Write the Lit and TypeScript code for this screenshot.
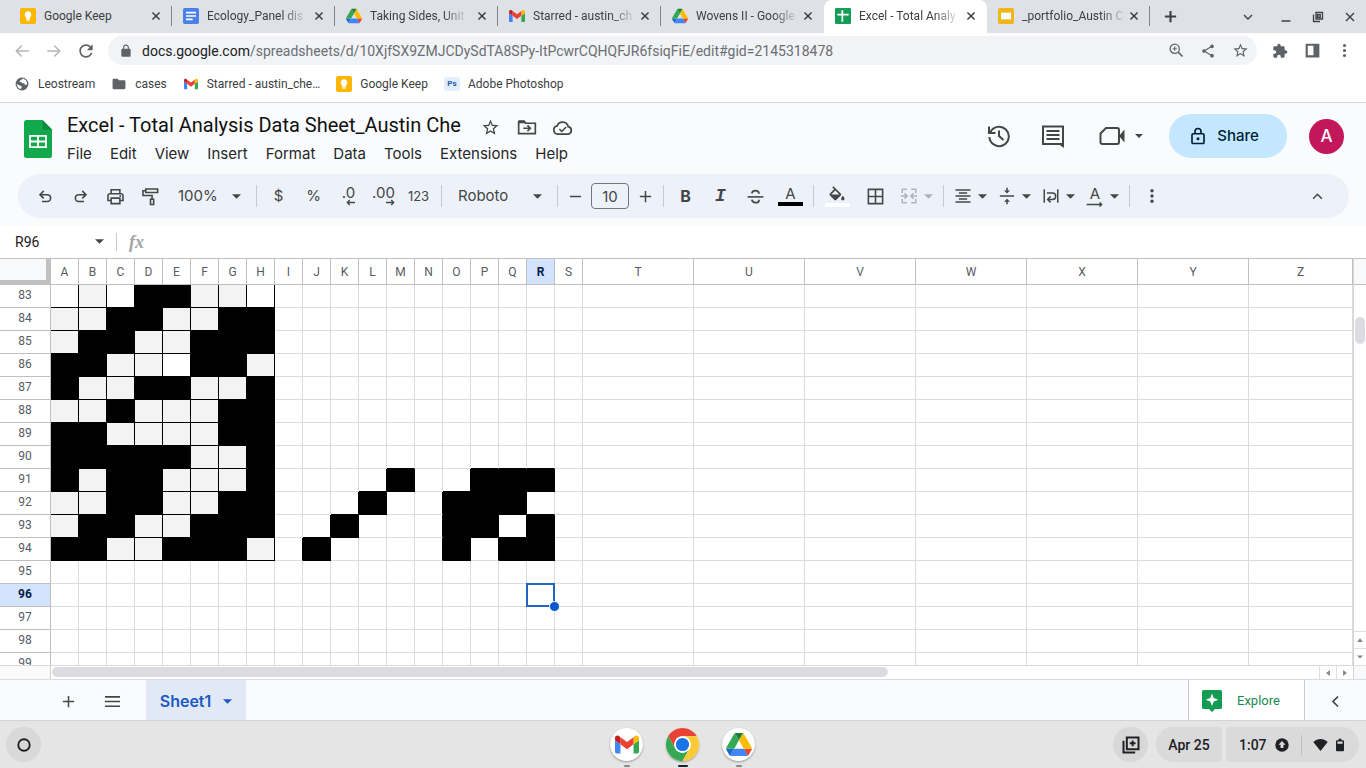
import { LitElement, html, svg, css, nothing } from "lit";
import { customElement, property } from "lit/decorators.js";
import { classMap } from "lit/directives/class-map.js";

const line = (d: string, w = 2) =>
  svg`<path d=${d} fill="none" stroke="currentColor" stroke-width=${w} />`;
const fill = (d: string, color = "currentColor") => svg`<path d=${d} fill=${color} />`;

const driveMark = svg`
  <path fill="#1967d2" d="m6.6 66.85 3.85 6.65c.8 1.4 1.95 2.5 3.3 3.3l13.75-23.8h-27.5c0 1.55.4 3.1 1.2 4.5z"/>
  <path fill="#34a853" d="m43.65 25-13.75-23.8c-1.35.8-2.5 1.9-3.3 3.3l-25.4 44a9.06 9.06 0 0 0 -1.2 4.5h27.5z"/>
  <path fill="#ea4335" d="m73.55 76.8c1.35-.8 2.5-1.9 3.3-3.3l1.6-2.75 7.65-13.25c.8-1.4 1.2-2.95 1.2-4.5h-27.502l5.852 11.5z"/>
  <path fill="#188038" d="m43.65 25 13.75-23.8c-1.35-.8-2.9-1.2-4.5-1.2h-18.5c-1.6 0-3.15.45-4.5 1.2z"/>
  <path fill="#4285f4" d="m59.8 53h-32.3l-13.75 23.8c1.35.8 2.9 1.2 4.5 1.2h50.8c1.6 0 3.15-.45 4.5-1.2z"/>
  <path fill="#fbbc04" d="m73.4 26.5-12.7-22c-.8-1.4-1.95-2.5-3.3-3.3l-13.75 23.8 16.15 28h27.45c0-1.55-.4-3.1-1.2-4.5z"/>`;

const gmailMark = svg`
  <path fill="#4285f4" d="M58 108h14V74L52 59v43c0 3.32 2.69 6 6 6"/>
  <path fill="#34a853" d="M120 108h14c3.32 0 6-2.69 6-6V59l-20 15"/>
  <path fill="#fbbc04" d="M120 48v26l20-15v-8c0-7.42-8.47-11.65-14.4-7.2"/>
  <path fill="#ea4335" d="M72 74V48l24 18 24-18v26L96 92"/>
  <path fill="#c5221f" d="M52 51v8l20 15V48l-5.6-4.2c-5.94-4.45-14.4-.22-14.4 7.2"/>`;

const ICONS: Record<string, { box?: string; art: unknown }> = {
  close: { art: line("M3.500 3.500l17 17M20.500 3.500l-17 17", 3.6) },
  closeThin: { art: line("M4 4l16 16M20 4L4 20", 2.8) },
  add: { art: line("M12 3v18M3 12h18", 2.4) },
  addBold: { art: line("M12 3v18M3 12h18", 3.4) },
  minus: { art: line("M3 12h18", 2.4) },
  chevronDown: { art: line("M4 8l8 8 8-8", 2.8) },
  chevronUp: { art: line("M4 16l8-8 8 8", 2.8) },
  chevronLeft: { art: line("M16 4l-8 8 8 8", 2.8) },
  minimize: { art: line("M3 20h18", 3) },
  restore: { art: line("M8 3h13v13H8zM11 7.500h5.500v5h-5.500zM3 7v14h13", 2.6) },
  back: { art: fill("M21 11H6.830l5.590-5.590L11 4l-8 8 8 8 1.410-1.410L6.830 13H21v-2z") },
  forward: { art: fill("M13 4l-1.410 1.410L17.170 11H3v2h14.170l-5.580 5.590L13 20l8-8z") },
  reload: { art: fill("M17.650 6.350C16.200 4.900 14.210 4 12 4c-4.420 0-7.990 3.580-7.990 8s3.570 8 7.990 8c3.730 0 6.840-2.550 7.730-6h-2.080c-.82 2.330-3.040 4-5.650 4-3.310 0-6-2.690-6-6s2.690-6 6-6c1.660 0 3.140.69 4.220 1.780L13 11h7V4l-2.350 2.350z") },
  lock: { art: fill("M18 8h-1V6c0-2.760-2.240-5-5-5S7 3.240 7 6v2H6c-1.100 0-2 .9-2 2v10c0 1.100.9 2 2 2h12c1.100 0 2-.9 2-2V10c0-1.100-.9-2-2-2zM9 6c0-1.660 1.340-3 3-3s3 1.340 3 3v2H9V6z") },
  zoom: { art: svg`<circle cx="9.500" cy="9.500" r="6.500" fill="none" stroke="currentColor" stroke-width="1.800"/>${line("M14.500 14.500l6 6", 2.4)}${line("M9.500 6.500v6M6.500 9.500h6", 1.6)}` },
  share: { art: svg`<g fill="currentColor"><circle cx="6" cy="12" r="2.800"/><circle cx="18" cy="5" r="2.800"/><circle cx="18" cy="19" r="2.800"/></g>${line("M18 5L6 12l12 7", 1.8)}` },
  star: { art: fill("M22 9.240l-7.190-.62L12 2 9.190 8.630 2 9.240l5.460 4.730L5.820 21 12 17.270 18.180 21l-1.630-7.030L22 9.240zM12 15.400l-3.760 2.270 1-4.280-3.320-2.880 4.380-.38L12 6.100l1.710 4.040 4.380.38-3.320 2.880 1 4.280L12 15.400z") },
  puzzle: { art: fill("M20.500 11H19V7c0-1.100-.9-2-2-2h-4V3.500C13 2.120 11.880 1 10.500 1S8 2.120 8 3.500V5H4c-1.100 0-1.990.9-1.990 2v3.800H3.500c1.490 0 2.700 1.210 2.700 2.700s-1.210 2.700-2.700 2.700H2V20c0 1.100.9 2 2 2h3.800v-1.500c0-1.490 1.210-2.700 2.700-2.700 1.490 0 2.700 1.210 2.700 2.700V22H17c1.100 0 2-.9 2-2v-4h1.500c1.380 0 2.500-1.120 2.500-2.500S21.880 11 20.500 11z") },
  panel: { art: svg`<path fill="currentColor" fill-rule="evenodd" d="M1 1h22v22H1zM4.500 4.500v15h9v-15z"/>` },
  dots: { art: svg`<g fill="currentColor"><circle cx="12" cy="5" r="2.200"/><circle cx="12" cy="12" r="2.200"/><circle cx="12" cy="19" r="2.200"/></g>` },
  globe: { art: svg`<circle cx="12" cy="12" r="11" fill="currentColor"/><path fill="#fff" d="M10 20.600C5.800 19.800 3 16.300 3 12l5 2.500c2 .5 4 1 3.500 3zM13 2.700l-2.500 3c-2 0-2.500 1-2.500 2.800h3l1 2h4l1 3 3.500-.5c1-4-1.500-9-7.500-10.300z"/>` },
  folder: { art: fill("M9.500 3H3C1.800 3 1 3.900 1 5v14c0 1.100.9 2 2 2h18c1.100 0 2-.9 2-2V7.500c0-1.100-.9-2-2-2h-9z") },
  keep: { art: svg`<rect width="24" height="24" rx="3" fill="#fbb704"/><path fill="#fff" d="M12 5a5 5 0 0 0-3 9v2h6v-2a5 5 0 0 0-3-9zM9.500 17h5v2h-5z"/>` },
  docs: { art: svg`<rect width="24" height="24" rx="2.500" fill="#4a80e8"/><path stroke="#fff" stroke-width="2.400" d="M4.500 7h15M4.500 12h15M4.500 17h10"/>` },
  sheets: { art: svg`<rect width="24" height="24" rx="2" fill="#149d58"/><path stroke="#fff" stroke-width="2.600" d="M3.500 10h17M11 3.500v17"/>` },
  slides: { art: svg`<rect width="24" height="24" rx="2.500" fill="#f0b41c"/><rect x="4.500" y="7" width="15" height="10" fill="#fff"/>` },
  drive: { box: "0 0 87.300 78", art: driveMark },
  gmail: { box: "52 34 88 82", art: gmailMark },
  gmailWide: { box: "52 42 88 66", art: gmailMark },
  chrome: { box: "0 0 48 48", art: svg`
    <path fill="#ea4335" d="M24 12H44.780A24 24 0 0 0 3.216 12L13.610 30A12 12 0 0 1 24 12"/>
    <path fill="#34a853" d="M13.610 30L3.216 12A24 24 0 0 0 24 48L34.390 30A12 12 0 0 1 13.610 30"/>
    <path fill="#fbc934" d="M34.390 30L24 48A24 24 0 0 0 44.780 12H24A12 12 0 0 1 34.390 30"/>
    <circle cx="24" cy="24" r="12" fill="#fff"/><circle cx="24" cy="24" r="9.600" fill="#1a73e8"/>` },
  sheetsDoc: { box: "0 0 28 38", art: svg`
    <path fill="#12a84c" d="M2.500 0H18.500L28 9.500V35.500A2.500 2.500 0 0 1 25.500 38H2.500A2.500 2.500 0 0 1 0 35.500V2.500A2.500 2.500 0 0 1 2.500 0z"/>
    <path fill="#0c8a3c" d="M18.500 0L28 9.500H18.500z"/>
    <path fill="none" stroke="#fff" stroke-width="1.800" d="M6 15.900h16v11.200H6zM14 15.900v11.200M6 21.500h16"/>` },
  moveTo: { art: svg`${line("M2 5.500h6.500l2 2H22V20H2z", 2)}${line("M7.500 13.500h8M12.500 10l3.500 3.500-3.500 3.500", 2)}${fill("M2 4h7l2.500 3.500H2z")}` },
  cloud: { art: svg`${line("M6.500 19.500a4.700 4.700 0 0 1-.6-9.300A6.600 6.600 0 0 1 18.500 11a4.300 4.300 0 0 1-.2 8.500z", 2)}${line("M8.500 13.800l2.700 2.700 5-5", 1.8)}` },
  history: { art: svg`${line("M3.200 8.500A9.700 9.700 0 1 1 2.400 13", 2)}${line("M2 2.500v6.500h6.500M12 6.500V12l4.500 4", 2)}` },
  comment: { art: svg`${line("M2 2.500h20V20H2z", 2)}${fill("M16.500 19.500H23V24z")}${line("M5.500 7h13M5.500 11h13M5.500 15h13", 2)}` },
  video: { box: "0 0 26 24", art: svg`${line("M7 4h11a2 2 0 0 1 2 2v12a2 2 0 0 1-2 2H3.500a2 2 0 0 1-2-2V9.500z", 2)}${fill("M20 12l5.500-6.500v13z")}` },
  lockOutline: { art: svg`<rect x="4" y="9" width="16" height="13" rx="1.500" fill="none" stroke="currentColor" stroke-width="2.200"/>${line("M8 9V6a4 4 0 0 1 8 0v3", 2.2)}<circle cx="12" cy="15.500" r="2" fill="currentColor"/>` },
  undo: { art: line("M7 19h7.500a4.800 4.800 0 0 0 0-9.600H4.500M9.500 4L4.200 9.400l5.300 5.300", 2.2) },
  redo: { art: line("M17 19H9.500a4.800 4.800 0 0 1 0-9.600h10M14.500 4l5.300 5.400-5.300 5.300", 2.2) },
  print: { art: line("M6.500 8V3.500h11V8M6.500 17H2.500v-6A2.500 2.500 0 0 1 5 8.500h14a2.500 2.500 0 0 1 2.500 2.500v6h-4M6.500 14h11v7h-11zM17 11.500h2", 2) },
  paint: { art: line("M6 2.500h15v4.500H6zM6 4.700H2.500v6H14v4.300M12 15.500h4v6.500h-4z", 2) },
  decLess: { box: "0 0 12 8", art: line("M12 4H2M5 .800L1.800 4 5 7.200", 1.8) },
  decMore: { box: "0 0 12 8", art: line("M0 4h10M7 .800L10.200 4 7 7.200", 1.8) },
  strike: { art: svg`${line("M2 12.500h20", 2)}${line("M16.500 8.500c-.3-2.500-2.200-3.800-4.600-3.800-2.300 0-4.300 1.100-4.400 3.400M7.500 16c.3 2.500 2 3.800 4.500 3.800 2.600 0 4.500-1.300 4.500-3.800", 2.2)}` },
  bucket: { box: "0 0 24 20", art: fill("M16.560 8.940L7.620 0 6.210 1.410l2.380 2.380-5.150 5.150c-.59.59-.59 1.540 0 2.120l5.500 5.500c.29.290.68.440 1.060.440s.77-.15 1.060-.44l5.500-5.500c.59-.58.59-1.530 0-2.120zM5.210 10L10 5.210 14.790 10H5.210zM19 11.500s-2 2.170-2 3.500c0 1.100.9 2 2 2s2-.9 2-2c0-1.330-2-3.500-2-3.500z") },
  borders: { art: fill("M2 2v20h20V2H2zm9 18H4v-7h7v7zm0-9H4V4h7v7zm9 9h-7v-7h7v7zm0-9h-7V4h7v7z") },
  merge: { art: svg`${line("M9 3H3v5M3 16v5h6M15 3h6v5M21 16v5h-6", 2)}${line("M1 12h8M6 8.500L9.500 12 6 15.500M23 12h-8M18 8.500L14.500 12l3.500 3.500", 2)}` },
  align: { art: fill("M6.500 15v2h11v-2zM2 21h20v-2H2zM2 13h20v-2H2zM6.500 7v2h11V7zM2 3v2h20V3z") },
  valign: { art: fill("M8 19.500h3V23h2v-3.500h3l-4-4zM16 4.500h-3V1h-2v3.500H8l4 4zM2.500 11v2h19v-2z") },
  wrap: { art: line("M3 3v18M21 3v18M6.500 8H14a3.500 3.500 0 0 1 0 8.500H8M11.500 12.500l-4 4 4 4", 2) },
  rotate: { box: "0 0 20 6", art: line("M0 3h18M15.500 .500L18 3l-2.500 2.500", 1.6) },
  caret: { box: "0 0 10 5", art: fill("M0 0h10L5 5z") },
  caretUp: { box: "0 0 8 5", art: fill("M0 5h8L4 0z") },
  caretLeft: { box: "0 0 5 8", art: fill("M5 0v8L0 4z") },
  caretRight: { box: "0 0 5 8", art: fill("M0 0v8l5-4z") },
  menu: { art: line("M0 4.500h24M0 12h24M0 19.500h24", 2.6) },
  explore: { box: "0 0 20 22", art: svg`<path fill="#149d52" d="M1.500 0h17A1.500 1.500 0 0 1 20 1.500v16a1.500 1.500 0 0 1-1.500 1.500H13l-3 3-3-3H1.500A1.500 1.500 0 0 1 0 17.500v-16A1.500 1.500 0 0 1 1.500 0z"/><path fill="#fff" d="M10 3.500l1.700 4.600 4.600 1.700-4.600 1.700L10 16.100l-1.700-4.600-4.600-1.700 4.600-1.700z"/>` },
  ring: { art: svg`<circle cx="12" cy="12" r="9.800" fill="none" stroke="currentColor" stroke-width="3.200"/>` },
  captures: { art: svg`${line("M7 3h14v14H7zM3 7v14h14", 2.4)}${line("M14 6.500v7M10.500 10h7", 2.4)}` },
  update: { art: svg`<circle cx="12" cy="12" r="11.500" fill="currentColor"/><path fill="#dbdbdb" d="M12 5l6 6.500h-3.500V17h-5v-5.500H6z"/>` },
  wifi: { box: "0 0 24 20", art: fill("M12 20L0 5C7-1.500 17-1.500 24 5z") },
  battery: { box: "0 0 14 22", art: svg`<path fill="currentColor" fill-rule="evenodd" d="M4.500 0h5v2.500H12A2 2 0 0 1 14 4.500v15.500a2 2 0 0 1-2 2H2a2 2 0 0 1-2-2V4.500A2 2 0 0 1 2 2.500h2.500zM2.500 5v4h9V5z"/>` },
};

@customElement("ui-icon")
class UiIcon extends LitElement {
  @property() name = "";
  @property({ type: Number }) w = 16;
  @property({ type: Number }) h = 0;
  static styles = css`
    :host { display: inline-flex; flex: none; }
    svg { display: block; }
  `;
  render() {
    const icon = ICONS[this.name];
    return html`<svg width=${this.w} height=${this.h || this.w} viewBox=${icon.box ?? "0 0 24 24"} aria-hidden="true">${icon.art}</svg>`;
  }
}

const reset = css`
  * { box-sizing: border-box; }
  button, input, select {
    font: inherit; color: inherit; background: none; border: 0; margin: 0; padding: 0;
    border-radius: 0; outline: 0;
  }
  button { display: inline-flex; align-items: center; justify-content: center; flex: none; white-space: nowrap; }
  a { color: inherit; text-decoration: none; }
`;

const TABS = [
  { icon: "keep", title: "Google Keep" },
  { icon: "docs", title: "Ecology_Panel dis", fade: true },
  { icon: "drive", title: "Taking Sides, Unit", fade: true },
  { icon: "gmail", title: "Starred - austin_ch", fade: true },
  { icon: "drive", title: "Wovens II - Google", fade: true },
  { icon: "sheets", title: "Excel - Total Analy", fade: true, active: true },
  { icon: "slides", title: "_portfolio_Austin C", fade: true },
];

const BOOKMARKS = [
  { icon: "globe", title: "Leostream" },
  { icon: "folder", title: "cases" },
  { icon: "gmail", title: "Starred - austin_che…" },
  { icon: "keep", title: "Google Keep" },
  { icon: "", title: "Adobe Photoshop" },
];

@customElement("browser-chrome")
class BrowserChrome extends LitElement {
  static styles = [reset, css`
    :host { display: block; background: #fff; color: #3c4043; font: 12px/16px Roboto, sans-serif; border-bottom: 1px solid #d5d9df; }
    .strip { display: flex; align-items: stretch; height: 33px; background: #dee1e6; padding-left: 9px; }
    .tab { display: flex; align-items: center; gap: 8px; flex: 0 1 163px; min-width: 0; padding: 0 11px 2px 11px; position: relative; }
    .tab::after { content: ""; position: absolute; right: 0; top: 6px; height: 20px; width: 1px; background: #80868b; }
    .tab.active { background: #fff; border-radius: 8px 8px 0 0; }
    .tab.active::after, .tab.before::after { display: none; }
    .tab .label { flex: 1; justify-content: flex-start; white-space: nowrap; min-width: 0; }
    .fade span { -webkit-mask-image: linear-gradient(90deg, #000 78%, rgba(0, 0, 0, 0.15)); mask-image: linear-gradient(90deg, #000 78%, rgba(0, 0, 0, 0.15)); }
    .btn { width: 32px; color: #5f6368; }
    .strip .btn { color: #3c4043; }
    .newtab { margin-left: 4px; }
    .window { margin-left: auto; display: flex; }
    .window .list { margin-right: 6px; }
    .bar { display: flex; align-items: center; height: 35px; padding: 0 6px; }
    .omnibox { flex: 1; display: flex; align-items: center; height: 29px; margin: 0 7px 0 6px; padding: 0 1px 0 10px; border-radius: 15px; background: #f1f3f4; color: #5f6368; gap: 8px; min-width: 0; }
    .url { flex: 1; font-size: 14px; white-space: nowrap; overflow: hidden; color: #6b6f74; }
    .url b { font-weight: 400; color: #202124; }
    .actions { display: flex; }
    .off { color: #b4b6b9; }
    .bookmarks { display: flex; align-items: center; gap: 16px; height: 34px; padding: 0 14px 2px; }
    .bookmarks a { display: flex; align-items: center; gap: 8px; color: #3c4043; }
    .mark { display: flex; width: 16px; justify-content: center; color: #5f6368; }
    .ps { font: 700 8px/14px Roboto, sans-serif; width: 16px; text-align: center; background: #e3edfa; color: #1b5fae; border-radius: 3px; }
  `];
  render() {
    return html`
      <div class="strip">
        ${TABS.map((t, i) => html`
          <div class=${classMap({ tab: true, active: !!t.active, before: !!TABS[i + 1]?.active })}>
            <ui-icon name=${t.icon} w="16"></ui-icon>
            <button class=${classMap({ label: true, fade: !!t.fade })}><span>${t.title}</span></button>
            <button aria-label="Close tab"><ui-icon name="close" w="10"></ui-icon></button>
          </div>`)}
        <button class="btn newtab" aria-label="New tab"><ui-icon name="addBold" w="15"></ui-icon></button>
        <div class="window">
          <button class="btn list" aria-label="Search tabs"><ui-icon name="chevronDown" w="12"></ui-icon></button>
          <button class="btn" aria-label="Minimize"><ui-icon name="minimize" w="12"></ui-icon></button>
          <button class="btn" aria-label="Restore"><ui-icon name="restore" w="12"></ui-icon></button>
          <button class="btn" aria-label="Close"><ui-icon name="closeThin" w="12"></ui-icon></button>
        </div>
      </div>
      <div class="bar">
        <button class="btn off" aria-label="Back"><ui-icon name="back" w="18"></ui-icon></button>
        <button class="btn off" aria-label="Forward"><ui-icon name="forward" w="18"></ui-icon></button>
        <button class="btn" aria-label="Reload"><ui-icon name="reload" w="20"></ui-icon></button>
        <div class="omnibox">
          <ui-icon name="lock" w="16" h="14"></ui-icon>
          <div class="url" role="textbox" tabindex="0" contenteditable="true" spellcheck="false" aria-label="Address"><b>docs.google.com</b>/spreadsheets/d/10XjfSX9ZMJCDySdTA8SPy-ItPcwrCQHQFJR6fsiqFiE/edit#gid=2145318478</div>
          <div class="actions">
            <button class="btn" aria-label="Zoom"><ui-icon name="zoom" w="17"></ui-icon></button>
            <button class="btn" aria-label="Share page"><ui-icon name="share" w="16"></ui-icon></button>
            <button class="btn" aria-label="Bookmark"><ui-icon name="star" w="17"></ui-icon></button>
          </div>
        </div>
        <button class="btn" aria-label="Extensions"><ui-icon name="puzzle" w="16"></ui-icon></button>
        <button class="btn" aria-label="Side panel"><ui-icon name="panel" w="15"></ui-icon></button>
        <button class="btn" aria-label="Menu"><ui-icon name="dots" w="17"></ui-icon></button>
      </div>
      <nav class="bookmarks">
        ${BOOKMARKS.map((b) => html`<a href="#">${b.icon
          ? html`<span class="mark"><ui-icon name=${b.icon} w=${b.icon === "keep" ? 16 : 14}></ui-icon></span>`
          : html`<span class="ps" aria-hidden="true">Ps</span>`}<span>${b.title}</span></a>`)}
      </nav>`;
  }
}

const MENUS = ["File", "Edit", "View", "Insert", "Format", "Data", "Tools", "Extensions", "Help"];

@customElement("sheets-header")
class SheetsHeader extends LitElement {
  static styles = [reset, css`
    :host { display: block; background: #f9fbfd; color: #444746; font: 15px/20px Inter, sans-serif; padding-bottom: 9px; }
    .top { display: flex; height: 71px; padding: 0 22px 0 24px; }
    .logo { padding-top: 17px; margin-right: 15px; }
    .name { display: flex; align-items: center; height: 26px; margin: 9px 0 2px; }
    h1 { margin: 0 20px 0 0; font: 400 20px/26px Roboto, sans-serif; color: #111; white-space: nowrap; }
    .name button { width: 20px; margin-right: 16px; margin-top: 4px; }
    .menus { display: flex; gap: 18px; height: 28px; align-items: center; }
    .menus button { color: #252728; }
    .right { display: flex; align-items: center; margin: 0 0 5px auto; }
    .right .tool { width: 54px; }
    .right .meet { width: 63px; gap: 10px; justify-content: flex-end; }
    .share { height: 44px; width: 118px; margin: 0 22px 0 26px; border-radius: 22px; background: #c2e7ff; color: #001d35; font-weight: 500; gap: 10px; padding-right: 8px; }
    .avatar { width: 35px; height: 35px; border-radius: 50%; background: #c2185b; color: #fff; font-size: 17px; font-weight: 500; }
    .tools { display: flex; align-items: center; height: 44px; margin: 0 17px 0 18px; padding: 0 14px 0 10px; border-radius: 22px; background: #edf2fa; }
    .tools .t { width: 35px; height: 30px; }
    .tools .wide { width: 38px; }
    .tools .split { width: 44px; height: 30px; justify-content: flex-start; gap: 5px; padding-left: 5px; }
    .tools .step { width: 26px; height: 30px; }
    .sep { flex: none; width: 1px; height: 22px; margin: 0 4px 0 5px; background: #c7cbd1; }
    .drop { display: grid; align-items: center; flex: none; }
    .drop > * { grid-area: 1 / 1; }
    .drop ui-icon { justify-self: end; margin-right: 10px; pointer-events: none; }
    .drop select { appearance: none; width: 100%; height: 30px; padding-left: 10px; }
    .zoom { width: 83px; }
    .font { width: 106px; }
    .font select { padding-left: 12px; }
    .size { width: 38px; height: 26px; margin: 0 3px; border: 1px solid #747775; border-radius: 4px; text-align: center; font-size: 15px; }
    .small { font-size: 13px; }
    .bold { font-weight: 700; font-size: 16px; }
    .ital { font: italic 700 18px/20px "Liberation Mono", monospace; }
    .stack { display: grid; justify-items: center; }
    .stack i { width: 25px; height: 4px; background: #000; }
    .stack i.white { background: #fff; }
    .stack span { font-size: 15px; line-height: 16px; }
    .dec { display: grid; }
    .dec span { font-size: 15px; line-height: 13px; }
    .dec ui-icon { justify-self: end; }
    .dim { color: #aeb3ba; }
    .end { margin-left: auto; }
  `];
  tool(name: string, label: string, w = 18) {
    return html`<button class="t" aria-label=${label}><ui-icon name=${name} w=${w}></ui-icon></button>`;
  }
  split(name: string, label: string, dim = false) {
    return html`<button class=${classMap({ split: true, dim })} aria-label=${label}><ui-icon name=${name} w="20" h="18"></ui-icon><ui-icon name="caret" w="9" h="5"></ui-icon></button>`;
  }
  render() {
    const sep = html`<span class="sep"></span>`;
    return html`
      <div class="top">
        <div class="logo"><ui-icon name="sheetsDoc" w="28" h="38"></ui-icon></div>
        <div>
          <div class="name">
            <h1>Excel - Total Analysis Data Sheet_Austin Che</h1>
            <button aria-label="Star"><ui-icon name="star" w="19"></ui-icon></button>
            <button aria-label="Move"><ui-icon name="moveTo" w="20"></ui-icon></button>
            <button aria-label="Document status"><ui-icon name="cloud" w="21"></ui-icon></button>
          </div>
          <div class="menus">${MENUS.map((m) => html`<button>${m}</button>`)}</div>
        </div>
        <div class="right">
          <button class="tool" aria-label="Version history"><ui-icon name="history" w="24"></ui-icon></button>
          <button class="tool" aria-label="Comments"><ui-icon name="comment" w="24"></ui-icon></button>
          <button class="meet" aria-label="Join a call"><ui-icon name="video" w="26" h="24"></ui-icon><ui-icon name="caret" w="8" h="4"></ui-icon></button>
          <button class="share"><ui-icon name="lockOutline" w="18"></ui-icon>Share</button>
          <button class="avatar">A</button>
        </div>
      </div>
      <div class="tools">
        ${this.tool("undo", "Undo", 17)}${this.tool("redo", "Redo", 17)}${this.tool("print", "Print", 19)}${this.tool("paint", "Paint format", 19)}
        <label class="drop zoom"><select aria-label="Zoom"><option>100%</option></select><ui-icon name="caret" w="9" h="5"></ui-icon></label>
        ${sep}
        <button class="t">$</button>
        <button class="t">%</button>
        <button class="t" aria-label="Decrease decimals"><span class="dec"><span>.0</span><ui-icon name="decLess" w="9" h="7"></ui-icon></span></button>
        <button class="t" aria-label="Increase decimals"><span class="dec"><span>.00</span><ui-icon name="decMore" w="9" h="7"></ui-icon></span></button>
        <button class="t small">123</button>
        ${sep}
        <label class="drop font"><select aria-label="Font"><option>Roboto</option></select><ui-icon name="caret" w="9" h="5"></ui-icon></label>
        ${sep}
        <button class="step" aria-label="Smaller"><ui-icon name="minus" w="15"></ui-icon></button>
        <input class="size" aria-label="Font size" .value=${"10"} />
        <button class="step" aria-label="Larger"><ui-icon name="add" w="15"></ui-icon></button>
        ${sep}
        <button class="t bold">B</button>
        <button class="t ital">I</button>
        ${this.tool("strike", "Strikethrough", 19)}
        <button class="t"><span class="stack"><span>A</span><i></i></span></button>
        ${sep}
        <button class="t wide" aria-label="Fill color"><span class="stack"><ui-icon name="bucket" w="20" h="17"></ui-icon><i class="white"></i></span></button>
        <button class="t wide" aria-label="Borders"><ui-icon name="borders" w="19"></ui-icon></button>
        ${this.split("merge", "Merge cells", true)}
        ${sep}
        ${this.split("align", "Horizontal align")}${this.split("valign", "Vertical align")}${this.split("wrap", "Text wrapping")}
        <button class="split" aria-label="Text rotation"><span class="stack"><span>A</span><ui-icon name="rotate" w="20" h="5"></ui-icon></span><ui-icon name="caret" w="9" h="5"></ui-icon></button>
        ${sep}
        ${this.tool("dots", "More", 18)}
        <button class="t end" aria-label="Hide the menus"><ui-icon name="chevronUp" w="13"></ui-icon></button>
      </div>`;
  }
}

const COLS = "ABCDEFGHIJKLMNOPQRSTUVWXYZ".split("");
const FIRST_ROW = 83;
const ROW_COUNT = 17;
/* "#" black, "g" light grey, "w" bordered white, "." plain */
const WEAVE = [
  "wgw##ggw", "gg##gg##", "g##gg###", "##ggw##g",
  "#gg##gg#", "gg#ggg##", "##gggg##", "#####gg#",
  "#g##ggg#....#..###", "gg##gg##...#..###.", "g##gg###..#...##.#", "##gg###g.#....#.##",
];
const at = (r: number, c: number) => WEAVE[r]?.[c] ?? ".";
const solid = (r: number, c: number) => at(r, c) !== ".";

@customElement("sheet-grid")
class SheetGrid extends LitElement {
  static styles = [reset, css`
    :host { display: flex; flex-direction: column; flex: 1; min-height: 0; background: #fff; color: #575b5f; font: 12px/16px Roboto, sans-serif; }
    .formula { display: flex; align-items: center; height: 31px; flex: none; padding: 0 0 2px 15px; }
    .ref { width: 79px; font-size: 14px; color: #202124; }
    .formula button { width: 10px; color: #444746; }
    .formula .rule { width: 1px; height: 18px; margin: 0 12px; background: #c7cbd1; }
    .fx { font: italic 700 18px/22px "Liberation Serif", serif; color: #a0a3a7; width: 20px; }
    .formula .text { flex: 1; }
    .body { flex: 1; min-height: 0; display: grid; grid-template-columns: minmax(0, 1fr) 13px; grid-template-rows: minmax(0, 1fr) 14px; border-top: 1px solid #c0c0c0; border-bottom: 1px solid #d9dbde; }
    .view { overflow: hidden; }
    table { width: 100%; table-layout: fixed; border-collapse: separate; border-spacing: 0; }
    .rowcol { width: 51px; }
    .narrow { width: 28px; }
    .mid { width: 111px; }
    th { font-weight: 400; padding: 0; text-align: center; border-right: 1px solid #c0c0c0; border-bottom: 1px solid #c0c0c0; overflow: hidden; }
    thead th { height: 26px; }
    .corner { background: #f8f9fa; border-right: 5px solid #c0c0c0; border-bottom: 5px solid #c0c0c0; }
    tbody th { height: 23px; line-height: 18px; padding-bottom: 2px; }
    td { height: 23px; padding: 0; border-right: 1px solid #dcdcdc; border-bottom: 1px solid #dcdcdc; }
    .black { background: #000; }
    .grey { background: #f3f3f3; }
    .br { border-right-color: #000; }
    .bb { border-bottom-color: #000; }
    .on { background: #d3e3fd; color: #041e49; font-weight: 700; }
    .cursor { position: relative; }
    .cursor i { position: absolute; inset: -1px -1px -1px -1px; border: 2px solid #1f66c0; }
    .cursor b { position: absolute; right: -6px; bottom: -6px; width: 11px; height: 11px; border-radius: 50%; border: 1px solid #fff; background: #0b57d0; }
    .vbar { border-left: 1px solid #d5d5d5; display: flex; flex-direction: column; color: #80868b; }
    .vbar .cap { height: 26px; background: #f8f9fa; border-bottom: 1px solid #c0c0c0; }
    .vbar .track { flex: 1; padding: 32px 1px 0; }
    .vbar .thumb { height: 27px; border-radius: 5px; background: #dadce0; }
    .vbar button { height: 17px; width: 100%; border-top: 1px solid #e0e0e0; }
    .hbar { display: flex; align-items: stretch; border-top: 1px solid #d9d9d9; color: #80868b; }
    .hbar .stub { width: 51px; flex: none; border-right: 1px solid #d0d0d0; background: #fafafa; }
    .hbar .track { flex: 1; padding: 1px; }
    .hbar .thumb { width: 66%; height: 10px; border-radius: 5px; background: #dadce0; }
    .hbar button { width: 17px; border-left: 1px solid #e0e0e0; }
    .nook { border-left: 1px solid #d5d5d5; border-top: 1px solid #e0e0e0; background: #f8f9fa; }
  `];
  cell(r: number, c: number) {
    const k = at(r, c);
    const selected = r === 13 && c === 17;
    const cls = classMap({
      black: k === "#", grey: k === "g", cursor: selected,
      br: solid(r, c) || solid(r, c + 1),
      bb: solid(r, c) || solid(r + 1, c),
    });
    return html`<td class=${cls}>${selected ? html`<i></i><b></b>` : nothing}</td>`;
  }
  render() {
    return html`
      <div class="formula">
        <input class="ref" aria-label="Name box" .value=${"R96"} />
        <button aria-label="Named ranges"><ui-icon name="caret" w="9" h="5"></ui-icon></button>
        <span class="rule"></span>
        <label class="fx" for="fx">fx</label>
        <input class="text" id="fx" aria-label="Formula" />
      </div>
      <div class="body">
        <div class="view">
          <table>
            <colgroup>
              <col class="rowcol" />
              ${COLS.map((_, i) => html`<col class=${i < 19 ? "narrow" : i < 25 ? "mid" : ""} />`)}
            </colgroup>
            <thead><tr><th class="corner"></th>${COLS.map((c) => html`<th class=${c === "R" ? "on" : ""}>${c}</th>`)}</tr></thead>
            <tbody>
              ${Array.from({ length: ROW_COUNT }, (_, r) => html`<tr><th class=${r === 13 ? "on" : ""}>${FIRST_ROW + r}</th>${COLS.map((_, c) => this.cell(r, c))}</tr>`)}
            </tbody>
          </table>
        </div>
        <div class="vbar">
          <div class="cap"></div>
          <div class="track"><div class="thumb"></div></div>
          <button aria-label="Scroll up"><ui-icon name="caretUp" w="6" h="4"></ui-icon></button>
          <button aria-label="Scroll down"><ui-icon name="caret" w="6" h="4"></ui-icon></button>
        </div>
        <div class="hbar">
          <div class="stub"></div>
          <div class="track"><div class="thumb"></div></div>
          <button aria-label="Scroll left"><ui-icon name="caretLeft" w="4" h="6"></ui-icon></button>
          <button aria-label="Scroll right"><ui-icon name="caretRight" w="4" h="6"></ui-icon></button>
        </div>
        <div class="nook"></div>
      </div>`;
  }
}

@customElement("sheet-tabs")
class SheetTabs extends LitElement {
  static styles = [reset, css`
    :host { display: flex; align-items: stretch; height: 40px; flex: none; background: #f9fbfd; color: #444746; font: 16px/20px Inter, sans-serif; padding-left: 46px; }
    button { padding-top: 2px; }
    .ic { width: 44px; }
    .sheet { width: 100px; margin-left: 12px; background: #e1e9f7; color: #1b59c4; font-weight: 600; gap: 12px; }
    .explore { width: 117px; margin-left: auto; padding-left: 13px; justify-content: flex-start; background: #fff; border: solid #c9ccd0; border-width: 0 1px; color: #188a4f; font: 13px/20px Roboto, sans-serif; gap: 15px; }
    .side { width: 61px; }
  `];
  render() {
    return html`
      <button class="ic" aria-label="Add sheet"><ui-icon name="add" w="15"></ui-icon></button>
      <button class="ic" aria-label="All sheets"><ui-icon name="menu" w="15"></ui-icon></button>
      <button class="sheet">Sheet1<ui-icon name="caret" w="9" h="5"></ui-icon></button>
      <button class="explore"><ui-icon name="explore" w="20" h="22"></ui-icon>Explore</button>
      <button class="side" aria-label="Show side panel"><ui-icon name="chevronLeft" w="15"></ui-icon></button>`;
  }
}

@customElement("os-shelf")
class OsShelf extends LitElement {
  static styles = [reset, css`
    :host { display: grid; box-sizing: border-box; grid-template-columns: 1fr auto 1fr; align-items: center; height: 48px; flex: none; padding: 0 7px 0 6px; background: #e5e5e5; border-top: 1px solid #d2d3d5; color: #202124; font: 500 14px/20px Roboto, sans-serif; }
    .round { width: 35px; height: 35px; border-radius: 50%; background: #d8d8d8; }
    .apps { display: flex; gap: 23px; }
    .app { display: grid; justify-items: center; gap: 4px; padding-top: 5px; }
    .disc { width: 33px; height: 33px; border-radius: 50%; background: #fff; box-shadow: 0 1px 2px rgba(0, 0, 0, 0.35); display: grid; place-items: center; }
    .app i { width: 6px; height: 2px; border-radius: 1px; background: #85888c; }
    .app.current i { width: 10px; background: #202124; }
    .tray { display: flex; justify-content: flex-end; }
    .pill { height: 35px; background: #dadada; }
    .date { width: 66px; margin: 0 4px 0 8px; border-radius: 18px 4px 4px 18px; }
    .status { width: 133px; border-radius: 4px 18px 18px 4px; justify-content: flex-start; padding-left: 13px; gap: 8px; }
    .status s { width: 1px; height: 20px; background: #bdbdbd; margin: 0 3px 0 4px; }
  `];
  render() {
    return html`
      <div><button class="round" aria-label="Launcher"><ui-icon name="ring" w="14"></ui-icon></button></div>
      <div class="apps">
        <button class="app" aria-label="Gmail"><span class="disc"><ui-icon name="gmailWide" w="24" h="19"></ui-icon></span><i></i></button>
        <button class="app current" aria-label="Chrome"><span class="disc"><ui-icon name="chrome" w="33"></ui-icon></span><i></i></button>
        <button class="app" aria-label="Drive"><span class="disc"><ui-icon name="drive" w="26" h="23"></ui-icon></span><i></i></button>
      </div>
      <div class="tray">
        <button class="round" aria-label="Captures"><ui-icon name="captures" w="20"></ui-icon></button>
        <button class="pill date">Apr 25</button>
        <button class="pill status">1:07<ui-icon name="update" w="14"></ui-icon><s></s><ui-icon name="wifi" w="15" h="12"></ui-icon><ui-icon name="battery" w="8" h="14"></ui-icon></button>
      </div>`;
  }
}

@customElement("app-root")
class AppRoot extends LitElement {
  static styles = css`
    :host { display: flex; flex-direction: column; height: 100vh; overflow: hidden; }
    browser-chrome, sheets-header { flex: none; }
  `;
  render() {
    return html`
      <browser-chrome></browser-chrome>
      <sheets-header></sheets-header>
      <sheet-grid></sheet-grid>
      <sheet-tabs></sheet-tabs>
      <os-shelf></os-shelf>`;
  }
}
